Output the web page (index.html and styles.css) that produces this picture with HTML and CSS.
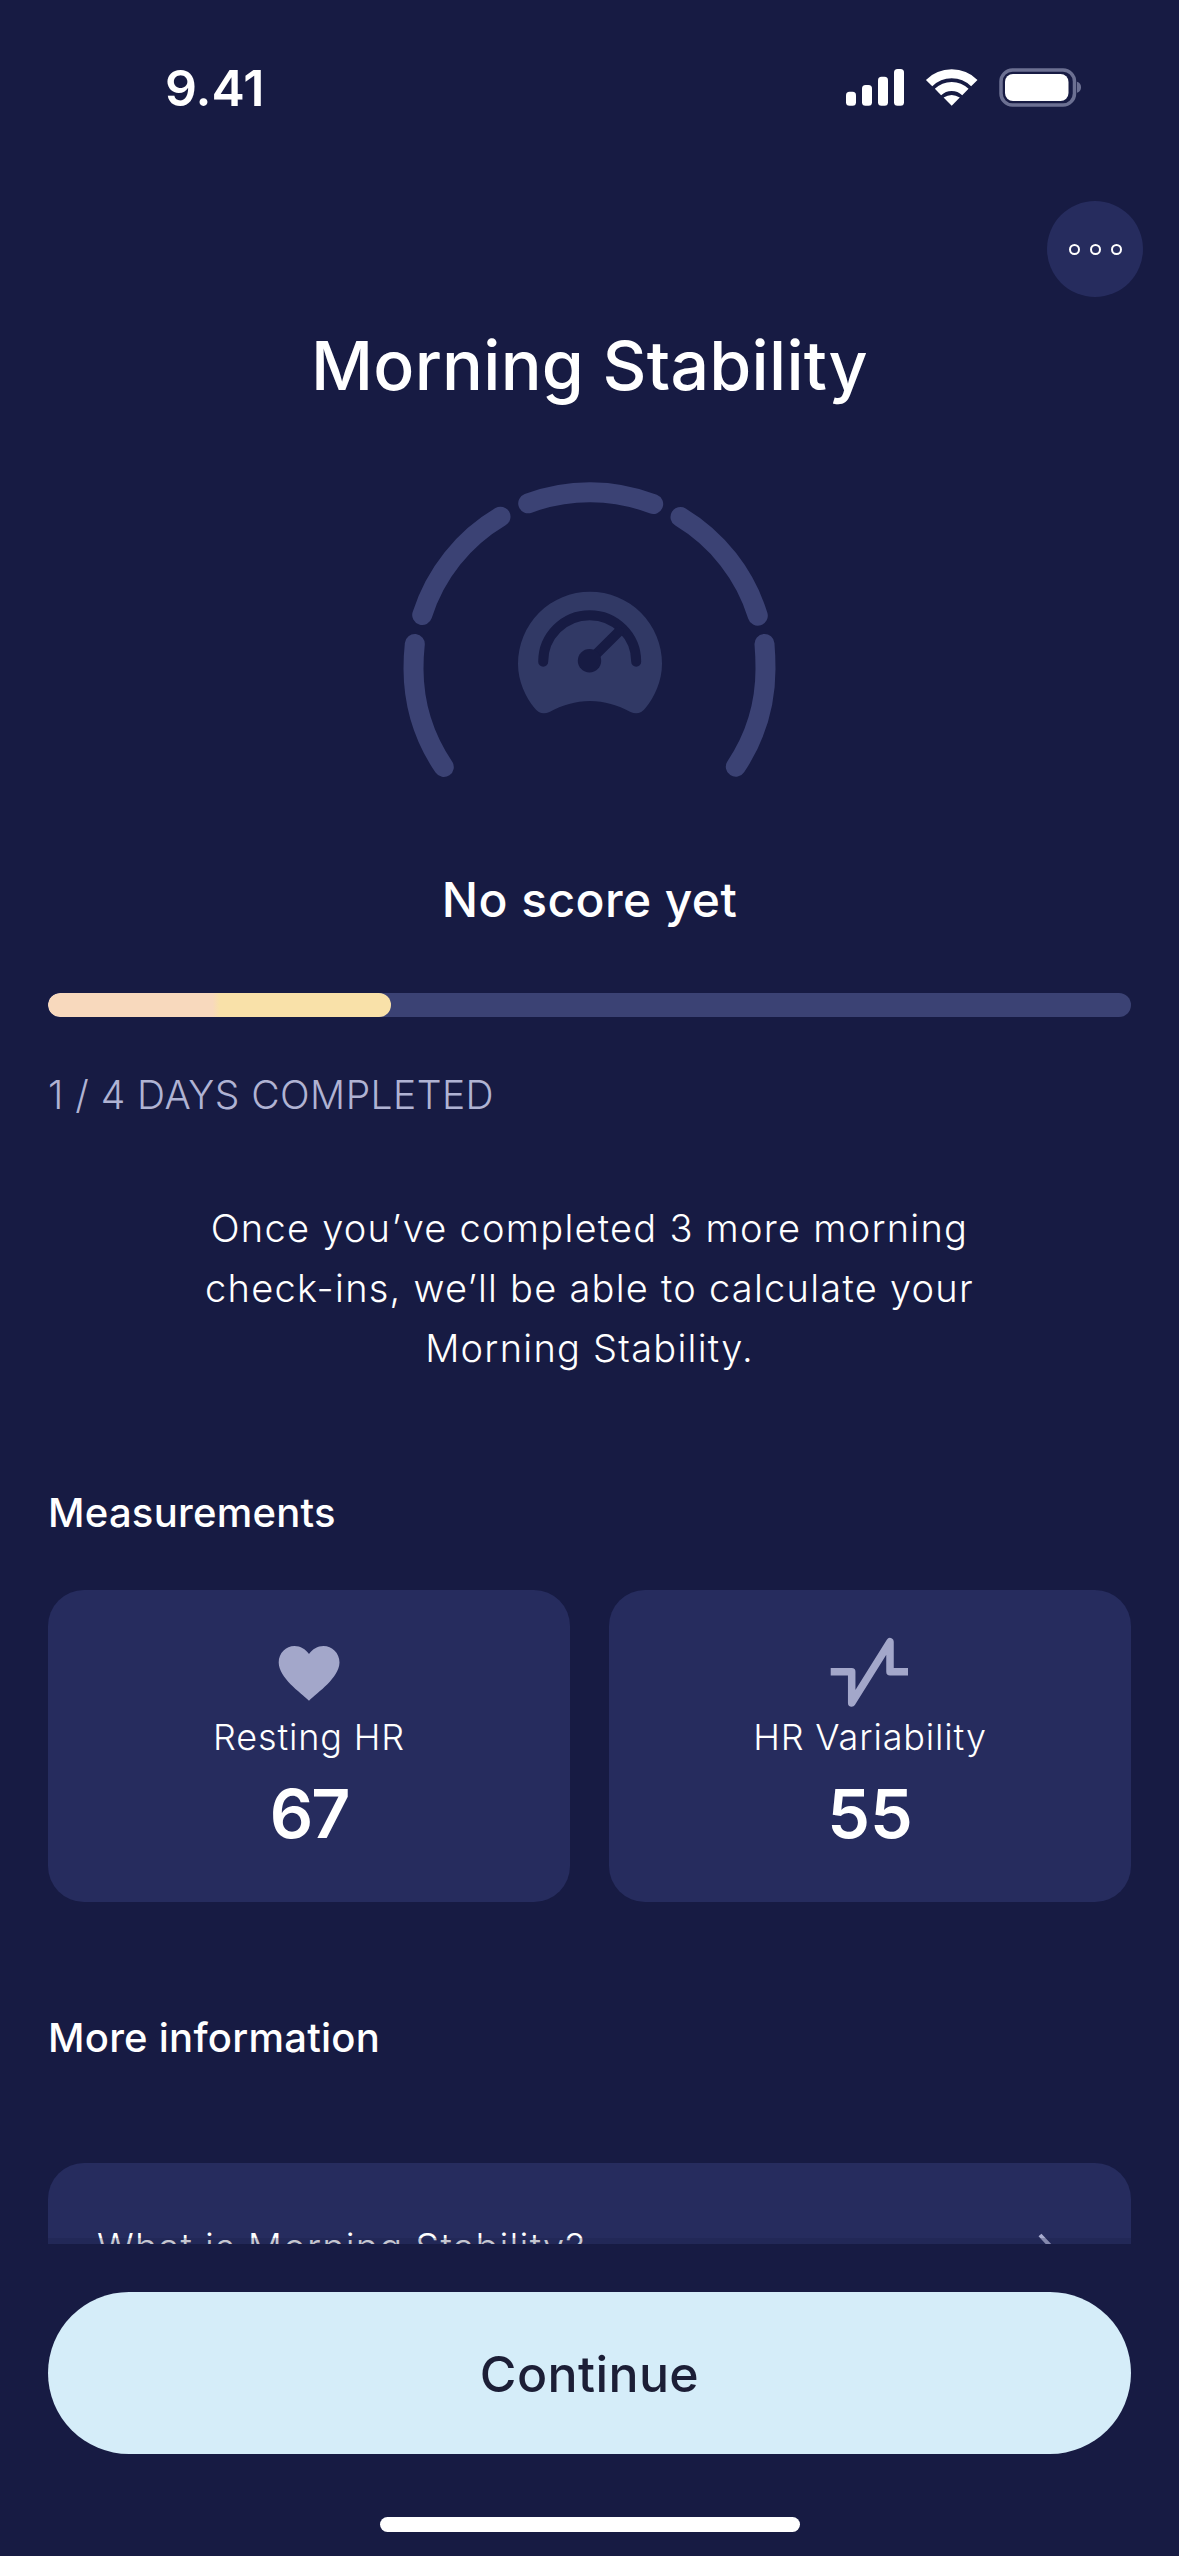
FILE: index.html
```html
<!DOCTYPE html>
<html lang="en">
<head>
<meta charset="utf-8">
<title>Morning Stability</title>
<link rel="stylesheet" href="styles.css">
</head>
<body>
<div class="screen">
  <div class="scroll">
    <header class="status">
      <span class="time">9.41</span>
      <svg class="status-icons" viewBox="840 60 245 55" width="245" height="55" aria-hidden="true">
        <rect class="fill-white" x="846" y="91.7" width="10" height="14" rx="3.5"/>
        <rect class="fill-white" x="862" y="85" width="10" height="20.7" rx="3.5"/>
        <rect class="fill-white" x="878" y="76.7" width="10" height="29" rx="3.5"/>
        <rect class="fill-white" x="894" y="69" width="10" height="36.7" rx="3.5"/>
        <path class="wifi-band" d="M929.1 83.1A32 32 0 0 1 974.3 83.1"/>
        <path class="wifi-band" d="M938 92A19.5 19.5 0 0 1 965.4 92"/>
        <path class="fill-white" d="M951.7 105.7L943.6 97.6Q951.7 92.5 959.8 97.6Z"/>
        <rect class="battery-frame" x="1001" y="70" width="73.5" height="35" rx="11.5"/>
        <rect class="fill-white" x="1005" y="74" width="63.5" height="27" rx="8"/>
        <path class="battery-nub" d="M1077 81.7Q1081 83 1081 87.2Q1081 91.4 1077 92.7Z"/>
      </svg>
    </header>
    <div class="actions">
      <button class="more" type="button" aria-label="More">
        <span class="dot"></span><span class="dot"></span><span class="dot"></span>
      </button>
    </div>
    <h1 class="title">Morning Stability</h1>
    <svg class="gauge" viewBox="389.5 470 400 320" width="400" height="320" aria-hidden="true">
      <path class="arc" d="M414.3 644Q413 656 413 669A176 176 0 0 0 443.3 767"/>
      <path class="arc" d="M421.7 615A176 176 0 0 1 500 516.7"/>
      <path class="arc" d="M527.7 503.3A176 176 0 0 1 652.7 504"/>
      <path class="arc" d="M680 517A176 176 0 0 1 757.3 615.7"/>
      <path class="arc" d="M764 644Q765 656 765 669A176 176 0 0 1 735.3 766.7"/>
      <path class="dial" d="M589.5 591.7A72 72 0 0 1 661.5 663.7C661.5 681 654 697 645 708Q639 716 630 712C617 705 604 701 589.5 701C575 701 562 705 549 712Q540 716 534 708C525 697 517.5 681 517.5 663.7A72 72 0 0 1 589.5 591.7Z"/>
      <path class="dial-cut" d="M542.7 661.7A46.5 46.5 0 0 1 635.7 661.7"/>
      <path class="dial-cut" d="M589 660.7L618 632"/>
      <circle class="hub" cx="589" cy="660.7" r="11.7"/>
    </svg>
    <p class="score">No score yet</p>
    <div class="track"><div class="fill" style="width:343px"></div></div>
    <p class="days">1 / 4 DAYS COMPLETED</p>
    <p class="copy">Once you’ve completed 3 more morning<br>check-ins, we’ll be able to calculate your<br>Morning Stability.</p>
    <h2 class="section section-first">Measurements</h2>
    <div class="cards">
      <article class="card">
        <svg class="card-icon" viewBox="269 1636 80 78" width="80" height="78" aria-hidden="true">
          <path class="icon-fill" d="M309 1700.7C300 1692 279 1678 278.7 1662.5C278.7 1653 286 1646 294.5 1646C300.5 1646 305.5 1649 309 1654C312.5 1649 317.5 1646 323.5 1646C332 1646 339.5 1653 339.5 1662.5C339 1678 318 1692 309 1700.7Z"/>
        </svg>
        <span class="card-label">Resting HR</span>
        <span class="card-value card-value-tight">67</span>
      </article>
      <article class="card">
        <svg class="card-icon" viewBox="830 1636 80 78" width="80" height="78" aria-hidden="true">
          <path class="icon-line" d="M830.7 1671.7H851.7V1703L890 1641.7V1671.7H908"/>
        </svg>
        <span class="card-label">HR Variability</span>
        <span class="card-value">55</span>
      </article>
    </div>
    <h2 class="section section-second">More information</h2>
    <div class="info">
      <span class="info-text">What is Morning Stability?</span>
      <svg class="chevron" viewBox="0 0 20 36" width="20" height="36" aria-hidden="true"><path d="M3 3L17 18L3 33"/></svg>
    </div>
  </div>
  <footer class="footer">
    <button class="continue" type="button">Continue</button>
    <div class="home"></div>
  </footer>
</div>
</body>
</html>
```
FILE: styles.css
```css
* { box-sizing: border-box; }
html, body { margin: 0; padding: 0; }
body { background: #171b43; font-family: Inter, "Noto Sans", sans-serif; color: #fff; }
.screen { width: 1179px; height: 2556px; display: flex; flex-direction: column; overflow: hidden; background: #171b43; }
.scroll { height: 2244px; flex: none; overflow: hidden; position: relative; display: flex; flex-direction: column; align-items: stretch; padding: 0 48px; }
.scroll::after { content: ""; position: absolute; left: 0; right: 0; bottom: 0; height: 6px; background: rgba(23, 27, 67, .25); }
.status { height: 176px; margin: 0 -48px; flex: none; position: relative; }
.time { position: absolute; left: 165px; top: 58px; font-size: 50px; line-height: 60px; font-weight: 600; letter-spacing: 0; }
.status-icons { position: absolute; left: 840px; top: 60px; }
.fill-white { fill: #fff; }
.wifi-band { fill: none; stroke: #fff; stroke-width: 9; }
.battery-frame { fill: none; stroke: #6c7092; stroke-width: 3.5; }
.battery-nub { fill: #6c7092; }
.actions { display: flex; justify-content: flex-end; margin: 25px -12px 0 0; flex: none; }
.more { width: 96px; height: 96px; border: 0; border-radius: 50%; background: #262c5e; display: flex; align-items: center; justify-content: center; gap: 10px; padding: 0; }
.dot { width: 11px; height: 11px; border-radius: 50%; border: 2.5px solid #fff; }
.title { margin: 28px 0 0; text-align: center; font-size: 68px; line-height: 80px; font-weight: 500; letter-spacing: .25px; flex: none; }
.gauge { display: block; margin: 65px auto 0; flex: none; }
.arc { fill: none; stroke: #3b4274; stroke-width: 20; stroke-linecap: round; }
.dial { fill: #313965; }
.dial-cut { fill: none; stroke: #171b43; stroke-width: 10; stroke-linecap: round; }
.hub { fill: #171b43; }
.score { margin: 80px 0 0; text-align: center; font-size: 48px; line-height: 60px; font-weight: 450; letter-spacing: .4px; flex: none; }
.track { margin-top: 63px; height: 24px; border-radius: 12px; background: #3b4274; overflow: hidden; flex: none; }
.fill { height: 100%; border-radius: 12px; background: linear-gradient(90deg, #f8d9bd 0, #f8d9bd 48%, #f9e1a9 50%, #f9e1a9 100%); }
.days { margin: 53px 0 0; font-size: 39px; line-height: 50px; color: #b0b3d3; font-weight: 300; letter-spacing: .45px; flex: none; }
.copy { margin: 78px 0 0; text-align: center; font-size: 38px; line-height: 60px; font-weight: 350; letter-spacing: 1.25px; flex: none; }
.section { margin: 0; font-size: 40px; line-height: 50px; font-weight: 450; letter-spacing: .25px; flex: none; }
.section-first { margin-top: 110px; }
.section-second { margin-top: 111px; }
.cards { margin-top: 52px; display: grid; grid-template-columns: 522px 522px; column-gap: 39px; flex: none; }
.card { height: 312px; border-radius: 36px; background: #262c5e; display: flex; flex-direction: column; align-items: center; padding-top: 46px; }
.card-icon { display: block; flex: none; }
.icon-fill { fill: #a3a7ca; }
.icon-line { fill: none; stroke: #a3a7ca; stroke-width: 7.5; stroke-linejoin: round; }
.card-label { font-size: 36px; line-height: 46px; font-weight: 350; letter-spacing: .85px; }
.card-value { margin-top: 13px; font-size: 68px; line-height: 80px; font-weight: 560; }
.card-value-tight { letter-spacing: -2px; }
.info { margin-top: 100px; height: 170px; border-radius: 36px; background: #262c5e; display: flex; align-items: flex-start; justify-content: space-between; padding: 59px 74px 0 49px; flex: none; }
.info-text { font-size: 38px; line-height: 50px; font-weight: 350; letter-spacing: 1.2px; }
.chevron { margin-top: 10px; }
.chevron path { fill: none; stroke: #a9add0; stroke-width: 4; }
.footer { flex: 1; display: flex; flex-direction: column; align-items: center; padding-top: 48px; }
.continue { width: 1083px; height: 162px; border: 0; border-radius: 81px; background: #d5edf9; color: #1c1e36; font-family: inherit; font-size: 50px; line-height: 60px; font-weight: 500; letter-spacing: .4px; padding: 2px 0 0; }
.home { margin-top: 63px; width: 420px; height: 15px; border-radius: 7.5px; background: #fff; }
```
